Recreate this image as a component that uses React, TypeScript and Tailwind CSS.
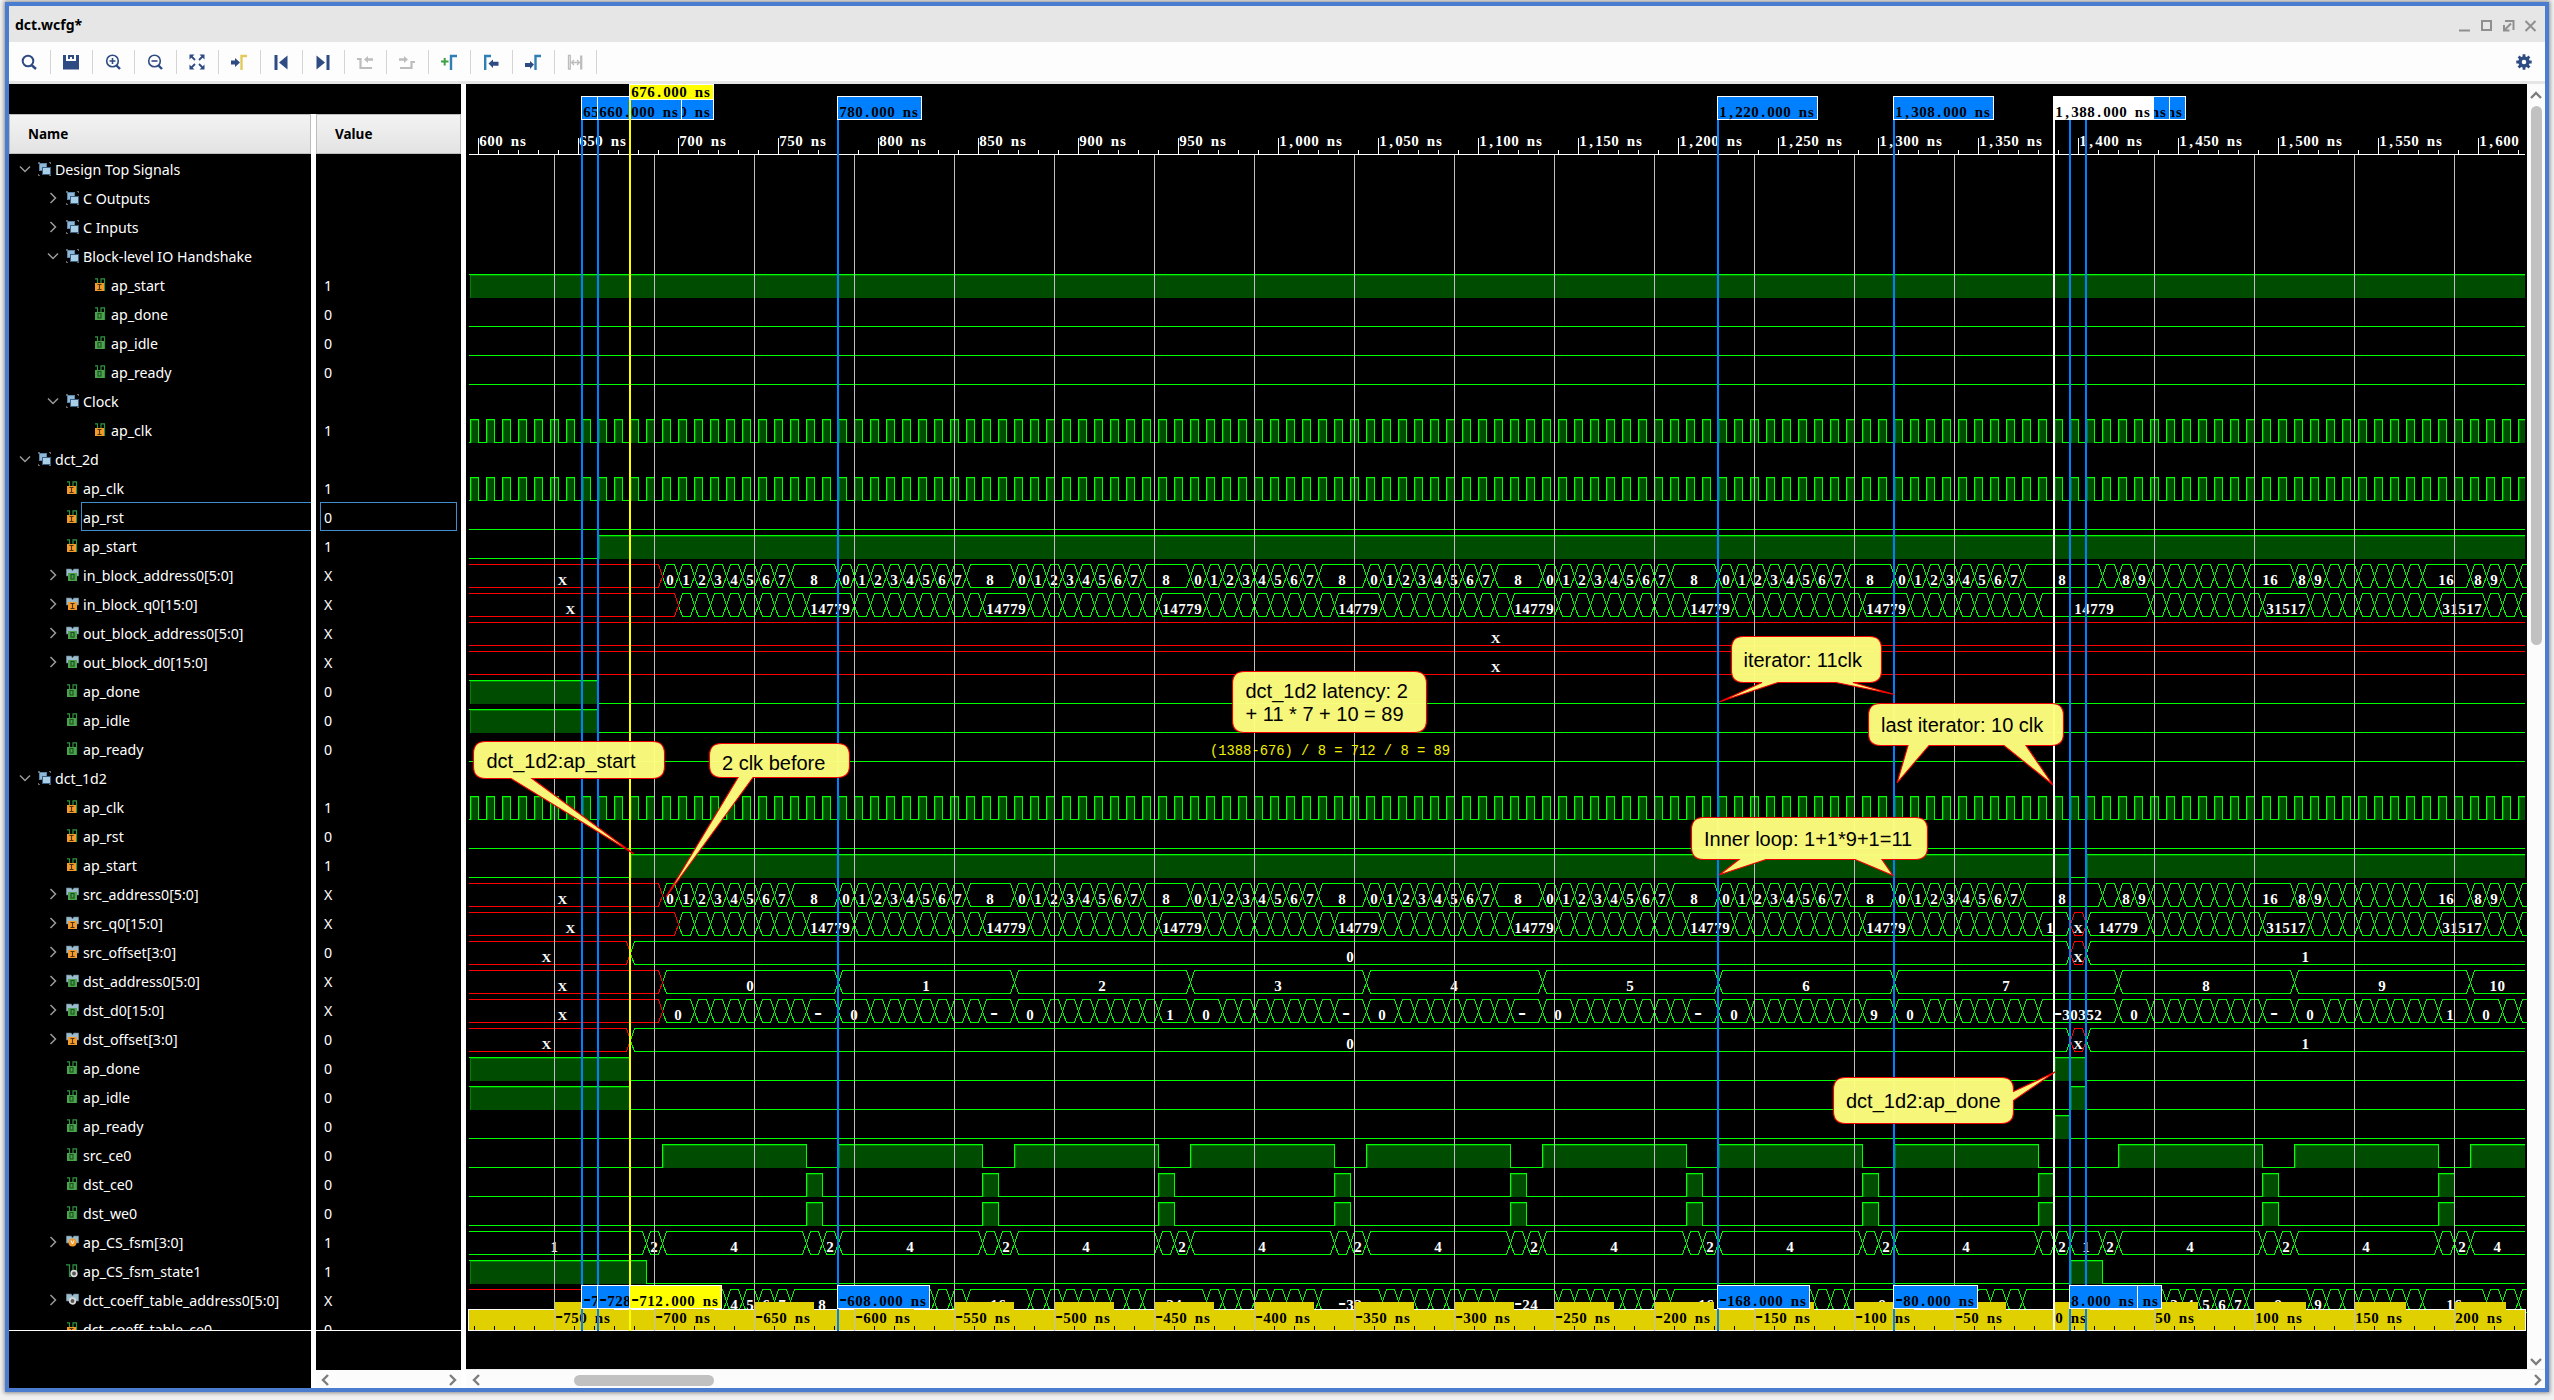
import React from "react";

/* ---------- time axis and row geometry ---------- */
const T0 = 600;
const X = (t: number) => 478 + (t - T0) * 2;
const LEFT = 469;
const RIGHT = 2525;
const rowMid = (row: number) => 170 + 29 * row;

const GREEN = "#00ff00";
const RED = "#ff0000";
const BLUE = "#0080ff";

/* Fixed-pitch label: every glyph is centred in its own 8px cell. */
function Cells({ x, y, s, fill, pitch = 8 }: { x: number; y: number; s: string; fill: string; pitch?: number }) {
  const at = (i: number) => x + pitch / 2 + i * pitch;
  const neg = s[0] === "-";
  const rest = neg ? s.slice(1) : s;
  const xs = rest
    .split("")
    .map((_, i) => at(i + (neg ? 1 : 0)))
    .join(" ");
  return (
    <text y={y} fill={fill} textAnchor="middle" fontSize={s === "X" ? 13.5 : 15} fontWeight={700} style={{ whiteSpace: "pre" }}>
      {neg && (
        <tspan x={at(0)} fontSize={23}>
          -
        </tspan>
      )}
      <tspan x={xs}>{rest}</tspan>
    </text>
  );
}

/* ---------- logic signals ---------- */
type Span = [number, number];

function Logic({ row, highs }: { row: number; highs: Span[] }) {
  const top = rowMid(row) - 12;
  const bot = rowMid(row) + 11;
  const c = (v: number) => Math.max(LEFT, Math.min(RIGHT, v));
  let d = "";
  const fills: React.ReactNode[] = [];
  let cur = LEFT;
  highs.forEach(([a, b], i) => {
    const xa = c(X(a));
    const xb = c(X(b));
    if (xa > LEFT) {
      d += `M${cur} ${bot + 0.5}H${xa + 0.5}V${top + 0.5}`;
    } else {
      d += `M${LEFT} ${top + 0.5}`;
    }
    d += `H${xb === RIGHT ? RIGHT : xb + 0.5}`;
    if (xb < RIGHT) d += `V${bot + 0.5}`;
    cur = xb;
    fills.push(
      <g key={i}>
        <rect x={xa + 1} y={top} width={xb - xa - 1} height={24} fill="#008000" />
        <rect x={xa + 2} y={top + 2} width={xb - xa - 2} height={22} fill="#004c00" />
      </g>
    );
  });
  if (cur < RIGHT) d += `M${cur} ${bot + 0.5}H${RIGHT}`;
  return (
    <g>
      {fills}
      <path d={d} stroke={GREEN} fill="none" />
    </g>
  );
}

/* ---------- bus signals ---------- */
/* [start, end, label, kind]; kind "x" is unknown, "t" is a truncated label */
type Seg = [number, number, string?, string?];
const BEGIN = 590;
const END = 1640;

function Bus({ row, segs }: { row: number; segs: Seg[] }) {
  const m = rowMid(row) + 0.5;
  const top = m - 12;
  const bot = m + 11;
  let green = "";
  let red = "";
  const labels: React.ReactNode[] = [];
  segs.forEach(([a, b, label, kind], i) => {
    const openL = a === BEGIN;
    const openR = b === END;
    const xa = openL ? LEFT : X(a) + 0.5;
    const xb = openR ? RIGHT : X(b) + 0.5;
    const l = openL ? xa : xa + 4;
    const r = openR ? xb : xb - 4;
    let d = openL ? `M${l} ${top}` : `M${xa} ${m}L${l} ${top}`;
    d += `H${r}`;
    if (openR) d += `M${r} ${bot}`;
    else d += `L${xb} ${m}L${r} ${bot}`;
    d += `H${l}`;
    if (!openL) d += `L${xa} ${m}`;
    if (kind === "x") red += d;
    else green += d;
    if (label) {
      const start = openL ? (openR ? 467 : 463) : xa;
      const mid = (start + xb) / 2 - 0.5 - (kind === "t" ? 4 : 0);
      labels.push(<Cells key={i} x={mid - label.length * 4} y={m + 8} s={label} fill="#ffffff" />);
    }
  });
  return (
    <g>
      <path d={green} stroke={GREEN} fill="none" />
      <path d={red} stroke={RED} fill="none" />
      {labels}
    </g>
  );
}

const steps = (from: number, n: number, labels: string[] = []): Seg[] =>
  Array.from({ length: n }, (_, i) => [from + i * 8, from + i * 8 + 8, labels[i]] as Seg);

const GROUPS = [692, 780, 868, 956, 1044, 1132, 1220, 1308];
const DIGITS = ["0", "1", "2", "3", "4", "5", "6", "7"];

const addressSegs: Seg[] = [
  [BEGIN, 692, "X", "x"],
  ...GROUPS.flatMap((g) => [...steps(g, 8, DIGITS), [g + 64, g === 1308 ? 1412 : g + 88, "8"] as Seg]),
  ...steps(1412, 1),
  ...[1420, 1508].flatMap((g) => [...steps(g, 8, ["8", "9"]), [g + 64, g + 88, "16"] as Seg]),
  ...steps(1596, 4, ["8", "9"]),
];

const qSegs = (middle: Seg[]): Seg[] => [
  [BEGIN, 700, "X", "x"],
  ...GROUPS.slice(0, 7).flatMap((g) => [...steps(g + 8, 8), [g + 72, g + 96, "14779"] as Seg]),
  ...steps(1316, 8),
  ...middle,
  ...steps(1436, 7),
  [1492, 1516, "31517"],
  ...steps(1516, 8),
  [1580, 1604, "31517"],
  ...steps(1604, 3),
];

const offsetSegs: Seg[] = [
  [BEGIN, 676, "X", "x"],
  [676, 1396, "0"],
  [1396, 1404, "X", "x"],
  [1404, END, "1"],
];

const dstAddressSegs: Seg[] = [
  [BEGIN, 692, "X", "x"],
  ...GROUPS.slice(0, 7).map((g, i) => [g, g + 88, String(i)] as Seg),
  [1308, 1420, "7"],
  [1420, 1508, "8"],
  [1508, 1596, "9"],
  [1596, END, "10"],
];

const dataGroup = (g: number, label: string): Seg[] => [
  [g, g + 16, "0"],
  ...steps(g + 16, 7),
  [g + 72, g + 88, label, "t"],
];

const dstDataSegs: Seg[] = [
  [BEGIN, 692, "X", "x"],
  ...["-", "-", "1", "-", "-", "-", "9"].flatMap((v, i) => dataGroup(GROUPS[i], v)),
  [1308, 1324, "0"],
  ...steps(1324, 7),
  [1380, 1420, "-30352"],
  ...dataGroup(1420, "-"),
  ...dataGroup(1508, "1"),
  [1596, 1612, "0"],
  ...steps(1612, 2),
];

const fsmGroup = (g: number): Seg[] => [[g, g + 72, "4"], [g + 72, g + 80], [g + 80, g + 88, "2"]];

const fsmSegs: Seg[] = [
  [BEGIN, 684, "1"],
  [684, 692, "2"],
  ...GROUPS.flatMap(fsmGroup),
  [1396, 1412, "1"],
  [1412, 1420, "2"],
  ...fsmGroup(1420),
  ...fsmGroup(1508),
  [1596, END, "4"],
];

const coeffSegs: Seg[] = [
  [BEGIN, 692, "X", "x"],
  ...steps(692, 8, DIGITS),
  [756, 788, "8"],
  ...["16", "24", "-32", "-24", "-16", "-8"].flatMap((v, i) => [
    ...steps(788 + 88 * i, 7),
    [844 + 88 * i, 876 + 88 * i, v] as Seg,
  ]),
  ...steps(1316, 7),
  [1372, 1412],
  ...steps(1412, 1),
  ...steps(1420, 8, DIGITS),
  [1484, 1516, "8"],
  ...steps(1516, 7, ["9"]),
  [1572, 1604, "16"],
  ...steps(1604, 3),
];

const clock: Span[] = Array.from({ length: 129 }, (_, i) => [596 + 8 * i, 600 + 8 * i] as Span);
const ceSpans: Span[] = [...GROUPS, 1420, 1508].map((g) => [g, g + 72] as Span);
const weSpans: Span[] = [...GROUPS, 1420, 1508].map((g) => [g + 72, g + 80] as Span);

/* ---------- markers ---------- */
function Flag({ x, y, h, s, kind }: { x: number; y: number; h: number; s: string; kind: "blue" | "yellow" | "white" }) {
  const fill = kind === "blue" ? BLUE : kind === "yellow" ? "#ffff00" : "#ffffff";
  return (
    <g>
      <rect x={x + 0.5} y={y + 0.5} width={s.length * 8 + 4} height={h - 1} fill={fill} stroke="#ffffff" />
      <Cells x={x + 2} y={y + h - 3} s={s} fill="#000000" />
    </g>
  );
}

const MARKS = [652, 660, 780, 1220, 1308, 1396, 1404];

/* ---------- notes ---------- */
const rb = (x1: number, y1: number, x2: number, y2: number, bottom = "", right = "") =>
  `M${x1 + 12} ${y1}H${x2 - 12}Q${x2} ${y1} ${x2} ${y1 + 12}${right}V${y2 - 12}Q${x2} ${y2} ${x2 - 12} ${y2}${bottom}H${x1 + 12}Q${x1} ${y2} ${x1} ${y2 - 12}V${y1 + 12}Q${x1} ${y1} ${x1 + 12} ${y1}Z`;

const NOTES: { d: string; tx: number; ty: number; lines: string[] }[] = [
  { d: rb(473.5, 741.5, 664.5, 778.5, "H532L634 854L511 778.5"), tx: 486.5, ty: 768, lines: ["dct_1d2:ap_start"] },
  { d: rb(709.5, 743.5, 849.5, 777.5, "H753L666 897L738 777.5"), tx: 722, ty: 770, lines: ["2 clk before"] },
  { d: rb(1232.5, 671.5, 1426.5, 732.5), tx: 1245.5, ty: 698, lines: ["dct_1d2 latency: 2", "+ 11 * 7 + 10 = 89"] },
  {
    d: rb(1731.5, 636.5, 1881.5, 682.5, "H1853L1894.5 694.5L1836 682.5H1778L1719 702L1762 682.5"),
    tx: 1743.5,
    ty: 667,
    lines: ["iterator: 11clk"],
  },
  {
    d: rb(1868.5, 703.5, 2063.5, 745.5, "H2026L2053 785L2004 745.5H1929L1897 783L1908 745.5"),
    tx: 1881,
    ty: 732,
    lines: ["last iterator: 10 clk"],
  },
  {
    d: rb(1691.5, 817.5, 1927.5, 859.5, "H1882L1893 875.5L1855 859.5H1766L1719 875L1739 859.5"),
    tx: 1704,
    ty: 846,
    lines: ["Inner loop: 1+1*9+1=11"],
  },
  { d: rb(1833.5, 1077.5, 2013.5, 1123.5, "", "V1091.5L2055 1072L2013.5 1100.5"), tx: 1846, ty: 1108, lines: ["dct_1d2:ap_done"] },
];

function Waves() {
  const fmt = (n: number) => (n >= 1000 ? `1,${String(n - 1000).padStart(3, "0")}` : String(n));
  const grid = Array.from({ length: 20 }, (_, i) => 554 + 100 * i).filter((x) => x !== 2054);
  return (
    <svg
      width={2061}
      height={1285}
      viewBox="466 84 2061 1285"
      shapeRendering="crispEdges"
      className="block shrink-0 bg-black [font-family:'Liberation_Serif',serif]"
    >
      {/* main ruler */}
      <path d={`M${LEFT} 154.5H${RIGHT}`} stroke="#fff" />
      {Array.from({ length: 103 }, (_, i) => (
        <path key={i} d={`M${478.5 + 20 * i} ${i % 5 ? 150 : 138}V154`} stroke="#fff" />
      ))}
      {Array.from({ length: 21 }, (_, i) => {
        const t = 600 + 50 * i;
        return <Cells key={t} x={X(t) + 1} y={146} s={t === 1600 ? "1,600" : `${fmt(t)} ns`} fill="#fff" />;
      })}

      {/* signals */}
      <Logic row={4} highs={[[590, END]]} />
      {[5, 6, 7, 12, 20, 23].map((r) => (
        <Logic key={r} row={r} highs={[]} />
      ))}
      {[9, 11, 22].map((r) => (
        <Logic key={r} row={r} highs={clock} />
      ))}
      <Logic row={13} highs={[[660, END]]} />
      <Bus row={14} segs={addressSegs} />
      <Bus row={15} segs={qSegs([[1380, 1436, "14779"]])} />
      <Bus row={16} segs={[[BEGIN, END, "X", "x"]]} />
      <Bus row={17} segs={[[BEGIN, END, "X", "x"]]} />
      <Logic row={18} highs={[[590, 660]]} />
      <Logic row={19} highs={[[590, 660]]} />
      <Logic row={24} highs={[[676, 1396], [1404, END]]} />
      <Bus row={25} segs={addressSegs} />
      <Bus row={26} segs={qSegs([[1380, 1396, "1", "t"], [1396, 1404, "X", "x"], [1404, 1436, "14779"]])} />
      <Bus row={27} segs={offsetSegs} />
      <Bus row={28} segs={dstAddressSegs} />
      <Bus row={29} segs={dstDataSegs} />
      <Bus row={30} segs={offsetSegs} />
      <Logic row={31} highs={[[590, 676], [1388, 1404]]} />
      <Logic row={32} highs={[[590, 676], [1396, 1404]]} />
      <Logic row={33} highs={[[1388, 1396]]} />
      <Logic row={34} highs={[...ceSpans, [1596, END]]} />
      <Logic row={35} highs={weSpans} />
      <Logic row={36} highs={weSpans} />
      <Bus row={37} segs={fsmSegs} />
      <Logic row={38} highs={[[590, 684], [1396, 1412]]} />
      <Bus row={39} segs={coeffSegs} />

      {/* floating ruler */}
      <rect x={468} y={1309} width={2058} height={60} fill="#000" />
      <rect x={468.5} y={1309.5} width={2057} height={21} fill="#e0d000" stroke="#fff" />
      {Array.from({ length: 20 }, (_, i) => {
        const s = `${-750 + 50 * i} ns`;
        const x = 554 + 100 * i;
        return (
          <g key={i}>
            <rect x={x} y={1302} width={s.length * 8 + 4} height={28} fill="#e0d000" />
            <Cells x={x + 1} y={1323} s={s} fill="#000" />
          </g>
        );
      })}
      {Array.from({ length: 103 }, (_, i) => (
        <path key={i} d={`M${474.5 + 20 * i} 1326V1330`} stroke="#000" />
      ))}
      {grid.map((x) => (
        <path key={x} d={`M${x + 0.5} 155V1331`} stroke="#c0c0c0" />
      ))}

      {/* marker lines and flags */}
      {MARKS.map((t) => (
        <rect key={t} x={X(t) - 1} y={120} width={2} height={1211} fill={BLUE} />
      ))}
      <rect x={2053} y={120} width={2} height={1211} fill="#fff" />
      <Flag x={581} y={96} h={24} s="652.000 ns" kind="blue" />
      <Flag x={629} y={96} h={24} s="676.000 ns" kind="blue" />
      <Flag x={597} y={96} h={24} s="660.000 ns" kind="blue" />
      <rect x={629} y={96} width={2} height={1235} fill="#ffff00" />
      <Flag x={629} y={84} h={16} s="676.000 ns" kind="yellow" />
      <Flag x={837} y={96} h={24} s="780.000 ns" kind="blue" />
      <Flag x={1717} y={96} h={24} s="1,220.000 ns" kind="blue" />
      <Flag x={1893} y={96} h={24} s="1,308.000 ns" kind="blue" />
      <Flag x={2085} y={96} h={24} s="1,404.000 ns" kind="blue" />
      <Flag x={2069} y={96} h={24} s="1,396.000 ns" kind="blue" />
      <Flag x={2053} y={96} h={24} s="1,388.000 ns" kind="white" />
      <Flag x={581} y={1285} h={24} s="-736.000 ns" kind="blue" />
      <Flag x={597} y={1285} h={24} s="-728.000 ns" kind="blue" />
      <Flag x={629} y={1285} h={24} s="-712.000 ns" kind="yellow" />
      <Flag x={837} y={1285} h={24} s="-608.000 ns" kind="blue" />
      <Flag x={1717} y={1285} h={24} s="-168.000 ns" kind="blue" />
      <Flag x={1893} y={1285} h={24} s="-80.000 ns" kind="blue" />
      <Flag x={2085} y={1285} h={24} s="16.000 ns" kind="blue" />
      <Flag x={2069} y={1285} h={24} s="8.000 ns" kind="blue" />

      {/* notes */}
      <text x={1210} y={755} fill="#f0f000" fontSize={13.8} className="[font-family:'Liberation_Mono',monospace]" style={{ whiteSpace: "pre" }}>
        (1388-676) / 8 = 712 / 8 = 89
      </text>
      {NOTES.map((n) => (
        <g key={n.tx}>
          <path d={n.d} fill="#ffff80" fillOpacity={0.965} stroke="#f00000" strokeWidth={1.1} shapeRendering="auto" />
          <text fill="#000" fontSize={20} className="[font-family:'Liberation_Sans',Arial,sans-serif]">
            {n.lines.map((l, i) => (
              <tspan key={l} x={n.tx} y={n.ty + 23 * i}>
                {l}
              </tspan>
            ))}
          </text>
        </g>
      ))}
    </svg>
  );
}

/* ---------- tree ---------- */
type Kind = "group" | "in" | "out" | "busIn" | "busOut" | "busVar" | "reg" | "busReg";
type Node = { l: number; k: Kind; n: string; v?: string; o?: "v" | ">" };

const TREE: Node[] = [
  { l: 0, k: "group", n: "Design Top Signals", o: "v" },
  { l: 1, k: "group", n: "C Outputs", o: ">" },
  { l: 1, k: "group", n: "C Inputs", o: ">" },
  { l: 1, k: "group", n: "Block-level IO Handshake", o: "v" },
  { l: 2, k: "in", n: "ap_start", v: "1" },
  { l: 2, k: "out", n: "ap_done", v: "0" },
  { l: 2, k: "out", n: "ap_idle", v: "0" },
  { l: 2, k: "out", n: "ap_ready", v: "0" },
  { l: 1, k: "group", n: "Clock", o: "v" },
  { l: 2, k: "in", n: "ap_clk", v: "1" },
  { l: 0, k: "group", n: "dct_2d", o: "v" },
  { l: 1, k: "in", n: "ap_clk", v: "1" },
  { l: 1, k: "in", n: "ap_rst", v: "0" },
  { l: 1, k: "in", n: "ap_start", v: "1" },
  { l: 1, k: "busOut", n: "in_block_address0[5:0]", v: "X", o: ">" },
  { l: 1, k: "busIn", n: "in_block_q0[15:0]", v: "X", o: ">" },
  { l: 1, k: "busOut", n: "out_block_address0[5:0]", v: "X", o: ">" },
  { l: 1, k: "busOut", n: "out_block_d0[15:0]", v: "X", o: ">" },
  { l: 1, k: "out", n: "ap_done", v: "0" },
  { l: 1, k: "out", n: "ap_idle", v: "0" },
  { l: 1, k: "out", n: "ap_ready", v: "0" },
  { l: 0, k: "group", n: "dct_1d2", o: "v" },
  { l: 1, k: "in", n: "ap_clk", v: "1" },
  { l: 1, k: "in", n: "ap_rst", v: "0" },
  { l: 1, k: "in", n: "ap_start", v: "1" },
  { l: 1, k: "busOut", n: "src_address0[5:0]", v: "X", o: ">" },
  { l: 1, k: "busIn", n: "src_q0[15:0]", v: "X", o: ">" },
  { l: 1, k: "busIn", n: "src_offset[3:0]", v: "0", o: ">" },
  { l: 1, k: "busOut", n: "dst_address0[5:0]", v: "X", o: ">" },
  { l: 1, k: "busOut", n: "dst_d0[15:0]", v: "X", o: ">" },
  { l: 1, k: "busIn", n: "dst_offset[3:0]", v: "0", o: ">" },
  { l: 1, k: "out", n: "ap_done", v: "0" },
  { l: 1, k: "out", n: "ap_idle", v: "0" },
  { l: 1, k: "out", n: "ap_ready", v: "0" },
  { l: 1, k: "out", n: "src_ce0", v: "0" },
  { l: 1, k: "out", n: "dst_ce0", v: "0" },
  { l: 1, k: "out", n: "dst_we0", v: "0" },
  { l: 1, k: "busVar", n: "ap_CS_fsm[3:0]", v: "1", o: ">" },
  { l: 1, k: "reg", n: "ap_CS_fsm_state1", v: "1" },
  { l: 1, k: "busReg", n: "dct_coeff_table_address0[5:0]", v: "X", o: ">" },
  { l: 1, k: "in", n: "dct_coeff_table_ce0", v: "0" },
];

const SELECTED = 12;

function NodeIcon({ kind }: { kind: Kind }) {
  if (kind === "group")
    return (
      <svg width="13" height="14" viewBox="0 0 13 14" shapeRendering="crispEdges">
        <path d="M0 0h2v1H1v1H0zM11 0h2v2h-1V1h-1zM0 12h1v1h1v1H0zM12 12h1v2h-2v-1h1z" fill="#666" />
        <rect x="1" y="1" width="8" height="8" fill="#5b87ab" />
        <rect x="2" y="2" width="6" height="6" fill="#8fb9d6" />
        <rect x="4" y="5" width="9" height="8" fill="#3b5f80" />
        <rect x="5" y="6" width="7" height="6" fill="#a9cfe6" />
      </svg>
    );
  const bus = kind.startsWith("bus");
  const base = bus ? (
    <path d="M.3 1h5l1.200 2L7.700 1h5v7H.3z" fill="#9bbccc" stroke="#5a7686" strokeWidth=".6" />
  ) : (
    <path d="M1 .8h2.500V5M7 5V.8h3.500v11.500H9" fill="none" stroke="#2f9440" strokeWidth="1.200" />
  );
  const ox = bus ? 2 : 1;
  let badge: React.ReactNode;
  if (kind === "in" || kind === "busIn")
    badge = (
      <g>
        <rect x={ox} y="5" width="9" height="8" fill="#f39a2b" />
        <path d={`M${ox + 2.5} 6.500h4M${ox + 4.5} 6.500v5M${ox + 2.5} 11.500h4`} stroke="#4a3210" strokeWidth="1.100" fill="none" />
      </g>
    );
  else if (kind === "out" || kind === "busOut")
    badge = (
      <g>
        <rect x={ox} y="5" width="9" height="8" fill="#4ba34c" />
        <rect x={ox + 3} y="6.500" width="3" height="4.500" stroke="#1d4f20" strokeWidth="1.100" fill="none" />
      </g>
    );
  else if (kind === "busVar")
    badge = (
      <g>
        <circle cx="6.500" cy="7.500" r="4" fill="#f39a2b" />
        <path d="M5 5.500l1.500 3.500L8 5.500" stroke="#fff" fill="none" />
      </g>
    );
  else badge = <circle cx={bus ? 6.5 : 8} cy={bus ? 8 : 9.5} r="2.800" fill="#555" stroke="#d8d8d8" strokeWidth="1.800" />;
  return (
    <svg width="13" height="14" viewBox="0 0 13 14">
      {kind === "reg" ? (
        <path d="M0 .8h3.500v11.500H5M7 6V.8h3.500V7" fill="none" stroke="#2f9440" strokeWidth="1.200" />
      ) : (
        base
      )}
      {badge}
    </svg>
  );
}

function TreeChevron({ o }: { o?: "v" | ">" }) {
  return (
    <svg width="12" height="12" viewBox="0 0 12 12" fill="none" stroke="#9a9a9a" strokeWidth="1.500">
      {o === "v" && <path d="M1 3.500l5 5 5-5" />}
      {o === ">" && <path d="M3.500 1l5 5-5 5" />}
    </svg>
  );
}

const PAD = ["pl-[10px]", "pl-[38px]", "pl-[66px]"];

function NameRow({ node, selected }: { node: Node; selected: boolean }) {
  return (
    <div className={`flex h-[29px] shrink-0 items-center ${PAD[node.l]}`}>
      <div className="flex w-[19px] shrink-0">
        <TreeChevron o={node.o} />
      </div>
      <div className="flex w-[15px] shrink-0">
        <NodeIcon kind={node.k} />
      </div>
      <div
        className={`flex h-[29px] min-w-0 grow items-center whitespace-nowrap pl-px pt-[2px] ${
          selected ? "border-y border-l border-[#3f8fd0]" : "border-y border-l border-transparent"
        }`}
      >
        {node.n}
      </div>
    </div>
  );
}

/* ---------- toolbar ---------- */
const NAVY = "#2f4b83";
const GRAY = "#bdbdbd";

const TOOLS: React.ReactNode[] = [
  <g fill="none" stroke={NAVY}>
    <circle cx="7" cy="7" r="5.300" strokeWidth="2" />
    <path d="M10.500 11l4.500 4" strokeWidth="2.400" />
  </g>,
  <path d="M0 1h3v6h10V1h3v14.500H0zM5 1h2v4H5zM9 1h2v4H9zM7 1h2v2H7z" fill={NAVY} />,
  <g fill="none" stroke={NAVY}>
    <circle cx="7.500" cy="7" r="5.800" strokeWidth="1.600" />
    <path d="M11.500 11.500l3.500 3.500" strokeWidth="2.400" />
    <path d="M4.500 7h6M7.500 4v6" strokeWidth="1.600" />
  </g>,
  <g fill="none" stroke={NAVY}>
    <circle cx="7.500" cy="7" r="5.800" strokeWidth="1.600" />
    <path d="M11.500 11.500l3.500 3.500" strokeWidth="2.400" />
    <path d="M4.500 7h6" strokeWidth="1.600" />
  </g>,
  <g fill={NAVY} stroke={NAVY}>
    <path d="M2 2l4 4M14 2l-4 4M2 14l4-4M14 14l-4-4" strokeWidth="1.800" />
    <path d="M.5.5h5l-5 5zM15.500.5h-5l5 5zM.5 15.500h5l-5-5zM15.500 15.500h-5l5-5z" stroke="none" />
  </g>,
  <g>
    <path d="M0 6.500h4V4l5 4.500-5 4.500v-2.500H0z" fill={NAVY} />
    <path d="M10.500 16V2H16" fill="none" stroke="#e3c95c" strokeWidth="2.400" />
  </g>,
  <g fill={NAVY}>
    <rect x="1.500" y="1" width="3" height="15" />
    <path d="M14.500 1.500v14L6 8.500z" />
  </g>,
  <g fill={NAVY}>
    <rect x="11.500" y="1" width="3" height="15" />
    <path d="M1.500 1.500v14L10 8.500z" />
  </g>,
  <g fill={GRAY}>
    <path d="M7 5.500L11 2v2.200h5v2.600h-5V9z" />
    <path d="M0 5h3.500v9H15" fill="none" stroke={GRAY} strokeWidth="2.200" />
  </g>,
  <g fill={GRAY}>
    <path d="M9 5.500L5 2v2.200H0v2.600h5V9z" />
    <path d="M16 8h-3.500v6H1" fill="none" stroke={GRAY} strokeWidth="2.200" />
  </g>,
  <g fill="none">
    <path d="M0 7.500h7.500M3.700 4v7.500" stroke="#3da045" strokeWidth="2" />
    <path d="M10 16V2h6" stroke="#2f7fb5" strokeWidth="2.400" />
  </g>,
  <g>
    <path d="M2.200 16V2H8" stroke="#2f7fb5" strokeWidth="2.400" fill="none" />
    <path d="M5.500 9.500L10 5.500v2.300h5.500v4H10V14z" fill={NAVY} />
  </g>,
  <g>
    <path d="M10.500 16V2H16" stroke="#2f7fb5" strokeWidth="2.400" fill="none" />
    <path d="M9 10.500L5 7v2H0v4h5v2z" fill={NAVY} />
  </g>,
  <g fill="none" stroke={GRAY} strokeWidth="1.300">
    <path d="M1.500 1.500h1.800v13.500H1.500zM13.700 1.500v14M14.700 1.500v14" />
    <path d="M4.500 8.500h8M7 6L4.500 8.500 7 11M10 6l2.500 2.500L10 11" />
  </g>,
];

function ScrollArrow({ d }: { d: string }) {
  return (
    <svg width="14" height="14" viewBox="0 0 14 14" fill="none" stroke="#7d7d7d" strokeWidth="2.400" className="shrink-0">
      <path d={d} />
    </svg>
  );
}

export default function App() {
  return (
    <div className="h-[1400px] w-[2554px] overflow-hidden bg-[#f1f1f1] pb-[8px] pl-[5px] pr-[5px] pt-[2px] text-[14.2px] [font-family:'Noto_Sans','Open_Sans',sans-serif]">
      <div className="flex h-[1390px] w-[2544px] flex-col border-4 border-[#4a7dd0] bg-white shadow-[0_0_4px_1px_#8a8a8a]">
        {/* title bar */}
        <div className="flex h-[36px] shrink-0 items-center justify-between bg-[#e6e6e6] pl-[6px] pr-[8px]">
          <div className="text-[14px] font-bold text-black">dct.wcfg*</div>
          <svg width="78" height="13" viewBox="0 0 78 13" fill="none" stroke="#8f8f8f" strokeWidth="2" className="mt-[5px]">
            <path d="M0 10.500h11" />
            <path d="M23 1h9v9h-9z" />
            <path d="M46 1h8.500v9" />
            <path d="M52 3.500l-6 6M45 5v5.500h5.500" />
            <path d="M66.500 1l10 10M76.500 1l-10 10" />
          </svg>
        </div>
        {/* toolbar */}
        <div className="flex h-[39px] shrink-0 items-center justify-between bg-[#fdfdfd] pr-[13px]">
          <div className="flex">
            {TOOLS.map((icon, i) => (
              <div key={i} className="flex h-[24px] w-[42px] items-center border-r border-[#d4d4d4] pl-[12px]">
                <svg width="16" height="16" viewBox="0 0 16 16">
                  {icon}
                </svg>
              </div>
            ))}
          </div>
          <svg width="16" height="16" viewBox="0 0 16 16">
            <path d="M8 .3V15.700M.3 8H15.700M2.600 2.600l10.800 10.800M13.400 2.600L2.600 13.400" stroke={NAVY} strokeWidth="2.800" />
            <circle cx="8" cy="8" r="4" fill="#fff" stroke={NAVY} strokeWidth="3.400" />
          </svg>
        </div>
        <div className="h-[3px] shrink-0 bg-[#e6e6e6]" />

        {/* body */}
        <div className="flex h-[1304px] shrink-0">
          <div className="flex w-[452px] shrink-0 flex-col text-white">
            <div className="h-[30px] shrink-0 bg-black" />
            <div className="flex grow">
              {/* names */}
              <div className="flex w-[302px] shrink-0 flex-col bg-black">
                <div className="flex h-[40px] shrink-0 items-center border border-[#bdbdbd] bg-gradient-to-b from-[#f3f3f3] to-[#e3e3e3] pl-[18px] text-[13.5px] font-bold text-black">
                  Name
                </div>
                <div className="flex h-[1177px] shrink-0 flex-col overflow-hidden border-b border-white">
                  {TREE.map((n, i) => (
                    <NameRow key={i} node={n} selected={i === SELECTED} />
                  ))}
                </div>
              </div>
              <div className="w-[5px] shrink-0 bg-white" />
              {/* values */}
              <div className="flex w-[145px] shrink-0 flex-col bg-black">
                <div className="flex h-[40px] shrink-0 items-center border border-[#bdbdbd] bg-gradient-to-b from-[#f3f3f3] to-[#e3e3e3] pl-[18px] text-[13.5px] font-bold text-black">
                  Value
                </div>
                <div className="flex h-[1177px] shrink-0 flex-col overflow-hidden border-b border-white pl-[4px] pr-[4px]">
                  {TREE.map((n, i) => (
                    <div
                      key={i}
                      className={`flex h-[29px] shrink-0 items-center border pl-[3px] pt-[2px] ${
                        i === SELECTED ? "border-[#3f8fd0]" : "border-transparent"
                      }`}
                    >
                      {n.v}
                    </div>
                  ))}
                </div>
                <div className="h-[39px] shrink-0" />
                <div className="flex grow items-center justify-between bg-[#fcfcfc] pl-[2px] pr-px pt-[2px]">
                  <ScrollArrow d="M10 2L5 7l5 5" />
                  <ScrollArrow d="M4 2l5 5-5 5" />
                </div>
              </div>
            </div>
          </div>
          <div className="w-[5px] shrink-0 bg-white" />
          {/* waveform and its scroll bars */}
          <div className="flex w-[2079px] shrink-0 flex-col">
            <div className="flex h-[1285px] shrink-0">
              <Waves />
              <div className="flex w-[18px] shrink-0 flex-col items-center bg-[#fcfcfc]">
                <div className="flex h-[21px] shrink-0 items-center pt-[1px]">
                  <ScrollArrow d="M2 10l5-5 5 5" />
                </div>
                <div className="mt-px h-[539px] w-[11px] shrink-0 rounded-full bg-[#c1c1c1]" />
                <div className="grow" />
                <div className="flex h-[15px] shrink-0 items-center">
                  <ScrollArrow d="M2 4l5 5 5-5" />
                </div>
              </div>
            </div>
            <div className="flex grow items-center border-t border-[#ededed] bg-[#fcfcfc] pl-[3px] pt-[2px]">
              <ScrollArrow d="M10 2L5 7l5 5" />
              <div className="ml-[91px] h-[11px] w-[140px] rounded-full bg-[#c1c1c1]" />
              <div className="grow" />
              <ScrollArrow d="M4 2l5 5-5 5" />
            </div>
          </div>
        </div>
      </div>
    </div>
  );
}
